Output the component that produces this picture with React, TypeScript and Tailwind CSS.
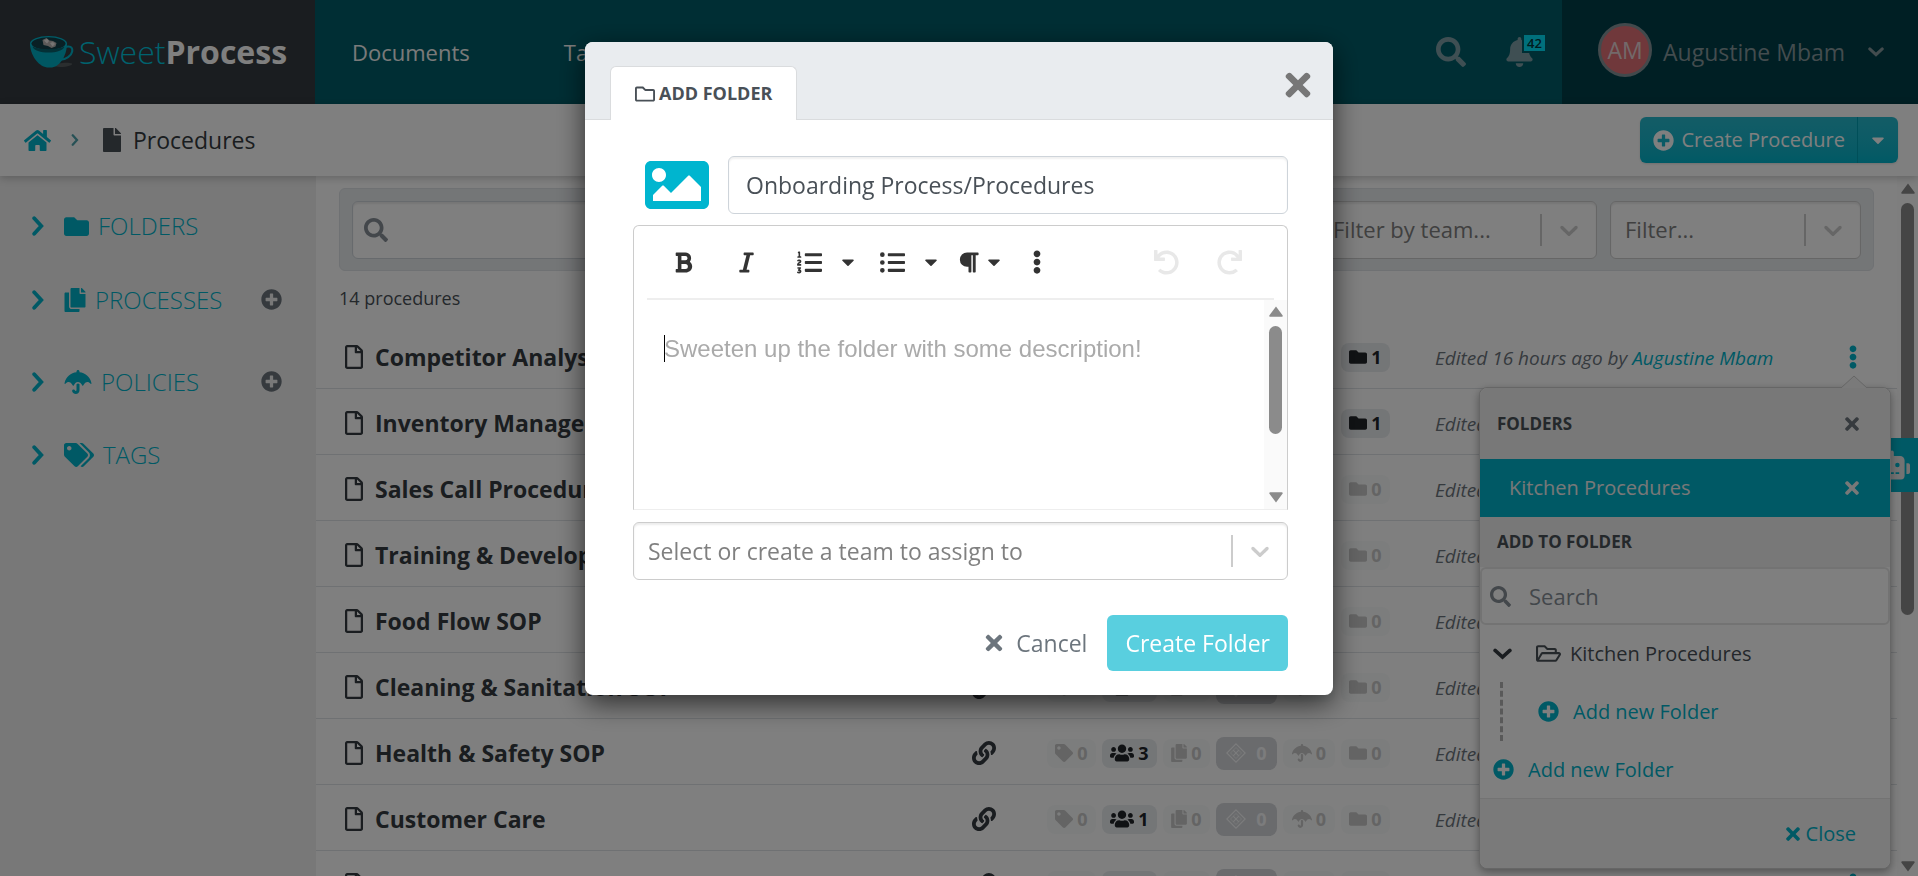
import React from "react";
import {
  FaBell,
  FaBold,
  FaCaretDown,
  FaCopy,
  FaEllipsisV,
  FaFile,
  FaFolder,
  FaHome,
  FaImage,
  FaItalic,
  FaLink,
  FaListOl,
  FaListUl,
  FaParagraph,
  FaPlusCircle,
  FaRedo,
  FaRegFile,
  FaRegFolder,
  FaRegFolderOpen,
  FaRobot,
  FaSearch,
  FaTag,
  FaTags,
  FaTimes,
  FaUmbrella,
  FaUndo,
  FaUsers,
} from "react-icons/fa";

type Procedure = { title: string; teams: number; folders: number };

const procedures: Procedure[] = [
  { title: "Competitor Analysis", teams: 1, folders: 1 },
  { title: "Inventory Management", teams: 1, folders: 1 },
  { title: "Sales Call Procedure", teams: 1, folders: 0 },
  { title: "Training & Development", teams: 1, folders: 0 },
  { title: "Food Flow SOP", teams: 1, folders: 0 },
  { title: "Cleaning & Sanitation SOP", teams: 1, folders: 0 },
  { title: "Health & Safety SOP", teams: 3, folders: 0 },
  { title: "Customer Care", teams: 1, folders: 0 },
  { title: "Employee Onboarding", teams: 1, folders: 0 },
];

function ChevronRight({ className }: { className: string }) {
  return (
    <svg viewBox="0 0 12 20" className={className} fill="none" stroke="currentColor" strokeWidth="3.8" strokeLinejoin="miter" strokeLinecap="round" aria-hidden="true">
      <path d="M2.200 2.200L9.300 10l-7.100 7.800" />
    </svg>
  );
}

function ChevronDown({ className }: { className: string }) {
  return (
    <svg viewBox="0 0 20 12" className={className} fill="none" stroke="currentColor" strokeWidth="3.8" strokeLinejoin="miter" strokeLinecap="round" aria-hidden="true">
      <path d="M2.200 2.200L10 9.300l7.800-7.100" />
    </svg>
  );
}

function SelectChevron() {
  return (
    <svg viewBox="0 0 20 20" className="h-[30px] w-[30px] fill-[#cccccc]" aria-hidden="true">
      <path d="M4.516 7.548c0.436-0.446 1.043-0.481 1.576 0l3.908 3.747 3.908-3.747c0.533-0.481 1.141-0.446 1.574 0 0.436 0.445 0.408 1.197 0 1.615-0.406 0.418-4.695 4.502-4.695 4.502-0.217 0.223-0.502 0.335-0.787 0.335s-0.57-0.112-0.789-0.335c0 0-4.287-4.084-4.695-4.502s-0.436-1.17 0-1.615z" />
    </svg>
  );
}

function SelectBox({ label, className, size }: { label: string; className: string; size: string }) {
  return (
    <div
      className={`relative flex h-[58px] items-center rounded-md border border-[#cccccc] bg-white shadow-[inset_0_2px_2px_rgba(0,0,0,0.08)] ${className}`}
    >
      <select
        aria-label={label}
        className={`h-full min-w-0 flex-1 appearance-none bg-transparent text-[#808080] outline-none ${size}`}
      >
        <option>{label}</option>
      </select>
      <span className="h-8 w-[2px] bg-[#cccccc]" />
      <span className="flex w-[54px] justify-center">
        <SelectChevron />
      </span>
    </div>
  );
}

function CupLogo() {
  return (
    <svg viewBox="0 0 44 32" className="h-8 w-11" aria-hidden="true">
      <path d="M22 30c4-3 16-4 20-2.500 1 1.500-4 3.500-12 3.500z" fill="#565c5e" />
      <path d="M34 11.500c5.500-2.500 9-0.500 8.200 4C41.400 20 36 23.200 30.500 23.800" fill="none" stroke="#00b3ca" strokeWidth="2" />
      <path d="M0 7.500C0 18 7.500 30 17 31.500h5C31 30 37 18 37 7.500z" fill="#00aec5" />
      <ellipse cx="18.500" cy="7.500" rx="18.500" ry="7.400" fill="#00b9d1" />
      <ellipse cx="18.500" cy="7.600" rx="17" ry="6.300" fill="#12414a" />
      <path d="M2.500 10.500c6 3.500 26 3.500 32 0-1.500 4-8 6-16 6s-14.500-2-16-6z" fill="#08616d" />
      <path d="M12.500 4l4-2 3 2.500 3.500 0.500 3.500 2-1 3.500-4 1.500-3.500-2-4.500-1z" fill="#b9b4b2" />
      <path d="M14 4.500l3-1.500 2 2-2 2.500zM20 7l3-1 2 2-2.500 2.500z" fill="#efebe9" />
    </svg>
  );
}

function DiamondIcon() {
  return (
    <svg viewBox="0 0 20 20" className="h-5 w-5" fill="none" stroke="currentColor" aria-hidden="true">
      <path d="M10 0.800l9.200 9.200-9.200 9.200L0.800 10z" strokeWidth="1.100" />
      <path d="M10 4.500l5.500 5.500-5.500 5.500L4.500 10z" strokeWidth="0.700" />
      <path d="M7.200 7.200l5.600 5.600M12.800 7.200l-5.600 5.600" strokeWidth="1.100" />
    </svg>
  );
}

function TopBar() {
  return (
    <header className="flex h-[104px] shrink-0 bg-[#005d69] text-[23px] text-white">
      <a href="#home" className="flex w-[315px] shrink-0 items-center gap-[5px] bg-[#343a40] pl-[30px]">
        <CupLogo />
        <span className="text-[32px] leading-none whitespace-nowrap">
          <span className="font-light text-[#00c5dd]">Sweet</span>
          <span className="font-bold">Process</span>
        </span>
      </a>
      <nav className="flex flex-1 items-center gap-[94px] pl-[37px] text-[22px] text-[#f4f4f4]">
        <a href="#documents">Documents</a>
        <a href="#tasks">Tasks</a>
      </nav>
      <div className="flex items-center gap-10 pr-7 text-[#7f9ea6]">
        <button type="button" aria-label="Search">
          <FaSearch className="h-[30px] w-[30px]" />
        </button>
        <button type="button" aria-label="Notifications" className="relative w-[28px]">
          <FaBell className="h-[30px] w-[27px]" />
          <span className="absolute -top-[2px] left-[18px] flex h-[16px] w-[21px] items-center justify-center bg-[#00e0f8] text-[13px] leading-none font-semibold text-[#00363d] outline-2 outline-[#005d69]">
            42
          </span>
        </button>
      </div>
      <button type="button" className="flex w-[356px] shrink-0 items-center bg-[#003e48] pl-9 text-[#86989d]">
        <span className="mb-1 flex h-[54px] w-[54px] items-center justify-center rounded-full border-[3px] border-[#849398] bg-[#e07076] text-[#e6d3d4]">
          AM
        </span>
        <span className="ml-[11px]">Augustine Mbam</span>
        <ChevronDown className="mr-[34px] ml-auto h-[10px] w-4" />
      </button>
    </header>
  );
}

function Crumbs() {
  return (
    <div className="relative z-10 flex h-[72px] shrink-0 items-center bg-white pr-5 pl-6 shadow-[0_2px_8px_rgba(0,0,0,0.22)]">
      <a href="#home" aria-label="Home" className="text-[#00b3ca]">
        <FaHome className="h-[27px] w-[27px]" />
      </a>
      <ChevronRight className="ml-[20px] h-[12px] w-2 text-[#4fa3ac]" />
      <FaFile className="ml-[23px] h-6 w-5 text-[#495057]" />
      <h1 className="ml-[11px] text-[23px] text-[#343a40]">Procedures</h1>
      <div className="ml-auto flex h-[46px] items-stretch overflow-hidden rounded-md bg-linear-to-b from-[#26b9cd] to-[#00b3ca] text-[20px] text-white shadow-sm">
        <button type="button" className="flex items-center gap-[7px] border-r border-[#009eb3] pr-3 pl-[13px]">
          <FaPlusCircle className="h-[21px] w-[21px]" />
          Create Procedure
        </button>
        <button type="button" aria-label="More create options" className="flex w-10 items-center justify-center">
          <FaCaretDown className="h-5 w-5" />
        </button>
      </div>
    </div>
  );
}

function SideItem({
  icon,
  label,
  add,
  className,
}: {
  icon: React.ReactNode;
  label: string;
  add?: boolean;
  className: string;
}) {
  return (
    <li className={`flex items-center pr-[34px] pl-[32px] text-[#00b3ca] ${className}`}>
      <ChevronRight className="h-5 w-3" />
      <a href={`#${label.toLowerCase()}`} className="ml-5 flex items-center gap-[9px] text-[24px] font-light">
        {icon}
        {label}
      </a>
      {add && (
        <button type="button" aria-label={`Add ${label.toLowerCase()}`} className="ml-auto text-[#6c757d]">
          <FaPlusCircle className="h-[21px] w-[21px]" />
        </button>
      )}
    </li>
  );
}

function Sidebar() {
  return (
    <aside className="w-[316px] shrink-0 bg-[#f0f0f0] pt-[13px]">
      <ul>
        <SideItem icon={<FaFolder className="h-[25px] w-[25px]" />} label="FOLDERS" className="h-[74px]" />
        <SideItem icon={<FaCopy className="h-6 w-[22px]" />} label="PROCESSES" add className="h-[73px]" />
        <SideItem icon={<FaUmbrella className="h-6 w-7" />} label="POLICIES" add className="h-[91px]" />
        <SideItem icon={<FaTags className="h-[30px] w-[30px]" />} label="TAGS" className="h-[55px]" />
      </ul>
    </aside>
  );
}

function Badge({
  icon,
  count,
  className,
}: {
  icon: React.ReactNode;
  count: number;
  className: string;
}) {
  return (
    <span
      className={`flex h-[29px] items-center justify-center gap-1 rounded-lg text-[18px] font-bold ${
        count > 0 ? "bg-[#e9ecef] text-[#212529]" : "bg-[#f9fbfb] text-[#c8c8c8]"
      } ${className}`}
    >
      {icon}
      {count}
    </span>
  );
}

function Row({ item, open }: { item: Procedure; open?: boolean }) {
  return (
    <li className="flex h-[66px] shrink-0 items-center border-b border-[#dee2e6] pt-[3px] pr-[28px] pl-[28px]">
      <FaRegFile className="h-6 w-5 text-[#343a40]" />
      <a href="#procedure" className="ml-[11px] flex-1 text-[23px] font-bold text-[#343a40]">
        {item.title}
      </a>
      <FaLink className="mr-[51px] h-6 w-6 text-[#343a40]" />
      <div className="flex items-center gap-[6px]">
        <Badge icon={<FaTag className="h-[18px] w-[18px]" />} count={0} className="w-[49px]" />
        <Badge icon={<FaUsers className="h-[22px] w-[24px]" />} count={item.teams} className="w-[55px]" />
        <Badge icon={<FaCopy className="h-[18px] w-4" />} count={0} className="w-[47px]" />
        <span className="flex h-[33px] w-[61px] items-center justify-center gap-[10px] rounded-lg bg-[#d4d6da] text-[18px] font-bold text-[#f8f9fa]">
          <DiamondIcon />0
        </span>
        <Badge icon={<FaUmbrella className="h-[18px] w-5" />} count={0} className="w-[52px]" />
        <Badge icon={<FaFolder className="h-[18px] w-[18px]" />} count={item.folders} className="w-[49px]" />
      </div>
      <p className="ml-[45px] w-[402px] pt-[2px] text-[19px] whitespace-nowrap text-[#6c757d] italic">
        Edited 16 hours ago by{" "}
        <a href="#author" className="text-[#00b3ca]">
          Augustine Mbam
        </a>
      </p>
      <div className="relative w-8">
        <button type="button" aria-label={`Options for ${item.title}`} className="flex w-full justify-center text-[#00b3ca]">
          <FaEllipsisV className="h-6 w-6" />
        </button>
        {open && <FolderMenu />}
      </div>
    </li>
  );
}

function FolderMenu() {
  return (
    <section
      aria-label="Folders"
      className="absolute top-[42px] -right-[22px] z-20 w-[412px] rounded-lg border border-[#cccccc] bg-white text-[20px] shadow-[0_3px_8px_rgba(0,0,0,0.35)]"
    >
      <svg viewBox="0 0 26 13" className="absolute -top-[13px] right-[23px] h-[13px] w-[26px]" aria-hidden="true">
        <path d="M0 13L13 1l13 12z" fill="#f5f5f5" />
        <path d="M0 13L13 1l13 12" fill="none" stroke="#cccccc" />
      </svg>
      <header className="flex h-[71px] items-center justify-between rounded-t-lg bg-[#f0f0f0] pr-[28px] pl-[17px] text-[17px] font-bold text-[#495057]">
        FOLDERS
        <button type="button" aria-label="Close folders" className="text-[#6c757d]">
          <FaTimes className="h-5 w-5" />
        </button>
      </header>
      <div className="flex h-[58px] items-center justify-between bg-[#00b3ca] pr-[28px] pl-[29px] text-[#f1f1f1]">
        Kitchen Procedures
        <button type="button" aria-label="Remove from folder">
          <FaTimes className="h-5 w-5" />
        </button>
      </div>
      <h2 className="flex h-[50px] items-center bg-[#f0f0f0] pl-[17px] text-[17px] font-bold text-[#495057]">ADD TO FOLDER</h2>
      <label className="flex h-[58px] items-center gap-[18px] rounded-md border-2 border-[#e6e6e6] pl-[8px]">
        <FaSearch className="h-[21px] w-[21px] text-[#868e96]" />
        <input
          type="text"
          aria-label="Search folders"
          placeholder="Search"
          className="min-w-0 flex-1 bg-transparent text-[22px] outline-none placeholder:text-[#868e96]"
        />
      </label>
      <div className="flex h-[57px] items-center pl-[13px] text-[#495057]">
        <ChevronDown className="h-[12px] w-[19px] text-[#343a40]" />
        <FaRegFolderOpen className="ml-6 h-[25px] w-[25px]" />
        <span className="ml-[9px]">Kitchen Procedures</span>
      </div>
      <div className="ml-[20px] flex h-[59px] items-center border-l-[3px] border-dashed border-[#b3b3b3] pl-[35px] text-[#00b3ca]">
        <button type="button" className="flex items-center gap-[14px]">
          <FaPlusCircle className="h-[21px] w-[21px]" />
          Add new Folder
        </button>
      </div>
      <div className="flex h-[57px] items-center pl-[13px] text-[#00b3ca]">
        <button type="button" className="flex items-center gap-[14px]">
          <FaPlusCircle className="h-[21px] w-[21px]" />
          Add new Folder
        </button>
      </div>
      <footer className="flex h-[70px] items-center justify-end rounded-b-lg border-t border-[#e6e6e6] bg-[#f4f4f4] pr-[34px] text-[#00b3ca]">
        <button type="button" className="flex items-center gap-[3px]">
          <FaTimes className="h-5 w-5" />
          Close
        </button>
      </footer>
    </section>
  );
}

function ScrollRail({ className, thumb }: { className: string; thumb: string }) {
  return (
    <div className={`flex shrink-0 flex-col items-center ${className}`} aria-hidden="true">
      <svg viewBox="0 0 14 11" className="h-[11px] w-[14px] fill-[#8b8b8b]">
        <path d="M7 0.500L13.500 9.200a0.900 0.900 0 0 1-0.700 1.500H1.200a0.900 0.900 0 0 1-0.700-1.500z" />
      </svg>
      <span className={`mt-[9px] w-[13px] rounded-full bg-[#8b8b8b] ${thumb}`} />
      <svg viewBox="0 0 14 11" className="mt-auto h-[11px] w-[14px] fill-[#8b8b8b]">
        <path d="M7 10.500L0.500 1.800A0.900 0.900 0 0 1 1.200 0.300h11.600a0.900 0.900 0 0 1 0.700 1.500z" />
      </svg>
    </div>
  );
}

function ToolButton({ label, children, className = "" }: { label: string; children: React.ReactNode; className?: string }) {
  return (
    <button type="button" aria-label={label} className={`flex items-center justify-center ${className}`}>
      {children}
    </button>
  );
}

function AddFolderDialog() {
  return (
    <div
      role="dialog"
      aria-modal="true"
      aria-labelledby="dialog-title"
      className="w-full max-w-[748px] rounded-lg bg-white text-[23px] shadow-[0_8px_28px_rgba(0,0,0,0.65)]"
    >
      <header className="flex h-[78px] items-end justify-between rounded-t-lg border-b border-[#dadcde] bg-[#e9ecef] pr-[17px] pl-[25px]">
        <h2
          id="dialog-title"
          className="-mb-px flex h-[54px] items-center gap-1 rounded-t-md border border-b-0 border-[#dadcde] bg-white px-6 text-[18px] font-bold text-[#495057]"
        >
          <FaRegFolder className="h-5 w-5" />
          ADD FOLDER
        </h2>
        <button type="button" aria-label="Close" className="mb-4 text-[#777777]">
          <FaTimes className="h-9 w-9" />
        </button>
      </header>
      <form className="pt-9 pr-[45px] pb-6 pl-12">
        <div className="flex h-[58px] items-center">
          <button type="button" aria-label="Choose image" className="ml-3 text-[#00b5cf]">
            <FaImage className="h-16 w-16" />
          </button>
          <input
            type="text"
            aria-label="Folder name"
            defaultValue="Onboarding Process/Procedures"
            className="ml-[19px] h-[58px] min-w-0 flex-1 rounded-md border border-[#ced4da] px-[17px] text-[#495057] shadow-[inset_0_2px_2px_rgba(0,0,0,0.06)] outline-none"
          />
        </div>
        <div className="mt-[11px] rounded-t-md border border-[#cccccc] border-b-[#eeeeee] text-[#333333]">
          <div className="mx-[13px] flex h-[74px] items-center border-b-2 border-[#eeeeee] pr-8 pl-[22px]">
            <ToolButton label="Bold" className="w-7">
              <FaBold className="h-[23px] w-[23px]" />
            </ToolButton>
            <ToolButton label="Italic" className="ml-[35px] w-7">
              <FaItalic className="h-[23px] w-[23px]" />
            </ToolButton>
            <ToolButton label="Ordered list" className="ml-[37px]">
              <FaListOl className="h-[25px] w-[25px]" />
            </ToolButton>
            <ToolButton label="Ordered list style" className="ml-4">
              <FaCaretDown className="h-5 w-5" />
            </ToolButton>
            <ToolButton label="Bullet list" className="ml-[22px]">
              <FaListUl className="h-[25px] w-[25px]" />
            </ToolButton>
            <ToolButton label="Bullet list style" className="ml-4">
              <FaCaretDown className="h-5 w-5" />
            </ToolButton>
            <ToolButton label="Paragraph format" className="ml-4 gap-1">
              <FaParagraph className="h-[23px] w-[23px]" />
              <FaCaretDown className="h-5 w-5" />
            </ToolButton>
            <ToolButton label="More" className="ml-[21px]">
              <FaEllipsisV className="h-6 w-6" />
            </ToolButton>
            <ToolButton label="Undo" className="ml-auto text-[#e8e8e8]">
              <FaUndo className="h-[25px] w-[25px]" />
            </ToolButton>
            <ToolButton label="Redo" className="ml-[38px] text-[#e8e8e8]">
              <FaRedo className="h-[25px] w-[25px]" />
            </ToolButton>
          </div>
          <div className="flex h-[209px]">
            <div className="relative flex-1 pt-[34px] pl-[30px]">
              <span className="absolute top-[35px] left-[30px] h-[27px] w-px bg-black" aria-hidden="true" />
              <textarea
                aria-label="Folder description"
                placeholder="Sweeten up the folder with some description!"
                className="h-full w-full resize-none font-['Liberation_Sans',Arial,sans-serif] text-[24px] leading-[30px] outline-none placeholder:text-[#aaaaaa]"
              />
            </div>
            <ScrollRail className="w-[23px] bg-[#fafafa] py-[6px]" thumb="h-[108px]" />
          </div>
        </div>
        <SelectBox label="Select or create a team to assign to" size="pl-[14px] text-[23px]" className="mt-3" />
        <div className="mt-[35px] flex items-center justify-end gap-5">
          <button type="button" className="flex items-center gap-[10px] text-[#6c757d]">
            <FaTimes className="h-6 w-6" />
            Cancel
          </button>
          <button type="submit" className="h-[56px] rounded-md bg-[#59cfdf] px-[18px] text-white">
            Create Folder
          </button>
        </div>
      </form>
    </div>
  );
}

export default function App() {
  return (
    <div className="relative flex h-screen flex-col overflow-hidden bg-white font-['Open_Sans','Noto_Sans',sans-serif]">
      <TopBar />
      <Crumbs />
      <div className="flex min-h-0 flex-1">
        <Sidebar />
        <main className="flex min-w-0 flex-1 flex-col pt-3">
          <div className="mr-[23px] ml-[23px] flex h-[83px] shrink-0 items-center gap-[13px] rounded-md border border-[#dee2e6] bg-[#e9ecef] px-3">
            <label className="flex h-[58px] min-w-0 flex-1 items-center gap-3 rounded-md border border-[#ced4da] bg-white px-[11px] shadow-[inset_0_2px_2px_rgba(0,0,0,0.08)]">
              <FaSearch className="h-6 w-6 text-[#868e96]" />
              <input type="text" aria-label="Search procedures" className="min-w-0 flex-1 bg-transparent text-[22px] outline-none" />
            </label>
            <SelectBox label="Filter by team..." size="pl-4 text-[22px]" className="w-[281px]" />
            <SelectBox label="Filter..." size="pl-[14px] text-[22px]" className="w-[251px]" />
          </div>
          <p className="mt-[13px] ml-[23px] h-[39px] shrink-0 text-[18px] leading-[28px] text-[#495057]">14 procedures</p>
          <ul className="flex min-h-0 flex-1 flex-col">
            {procedures.map((item, index) => (
              <Row key={item.title} item={item} open={index === 0} />
            ))}
          </ul>
        </main>
        <ScrollRail className="w-[21px] bg-[#fcfcfc] pt-[7px] pb-1" thumb="h-[412px]" />
      </div>
      <button
        type="button"
        aria-label="Open assistant"
        className="absolute top-[438px] right-0 flex h-[54px] w-7 items-center justify-end overflow-hidden bg-[#00b3ca] pr-2 text-[#e6e6e6]"
      >
        <FaRobot className="h-9 w-9 shrink-0" />
      </button>
      <div className="fixed inset-0 z-50 flex items-start justify-center bg-black/50 pt-[42px]">
        <AddFolderDialog />
      </div>
    </div>
  );
}
